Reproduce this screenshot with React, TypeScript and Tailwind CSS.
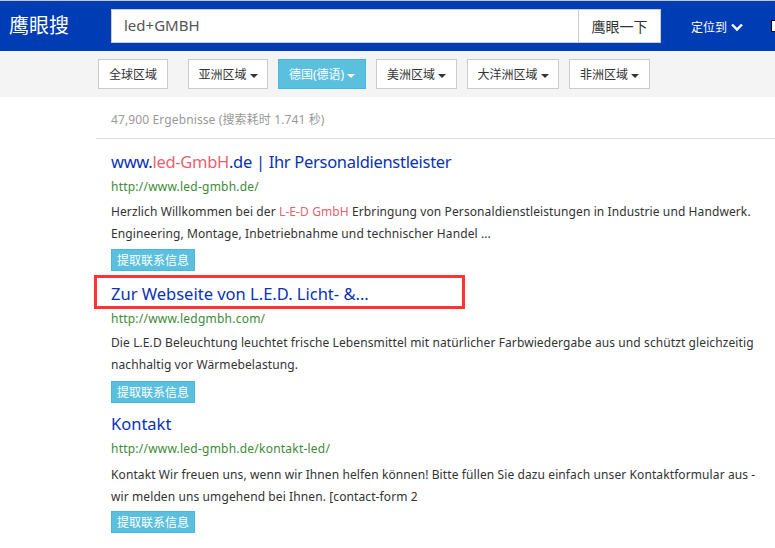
const font = "font-['Noto_Sans','Noto_Sans_CJK_SC',sans-serif]";

const regions = [
  { name: "全球区域", w: "w-[70px] mr-[10px]", caret: false },
  { name: "亚洲区域", w: "w-[80px]", caret: true },
  { name: "德国(德语)", w: "w-[88px]", caret: true, active: true },
  { name: "美洲区域", w: "w-[81px]", caret: true },
  { name: "大洋洲区域", w: "w-[92px]", caret: true },
  { name: "非洲区域", w: "w-[81px]", caret: true },
];

function Extract({ top }: { top: string }) {
  return (
    <div className={`flex h-[22px] w-[84px] items-center justify-center border border-[#46b8da] bg-[#5bc0de] pt-[2px] text-[12px] text-white ${top}`}>
      提取联系信息
    </div>
  );
}

export default function App() {
  return (
    <div className={`relative h-[548px] w-[775px] overflow-hidden bg-white ${font}`}>
      <div className="h-px bg-[#c8c8c8]" />
      {/* header */}
      <div className="flex h-[50px] items-center bg-[#003cb4] pb-px">
        <div className="w-[111px] shrink-0 pl-[9px] text-[20px] leading-none text-white">鹰眼搜</div>
        <div className="flex h-[34px] w-[550px] shrink-0 border border-[#cccccc] bg-white">
          <div className="flex-1 pl-[12px] text-[15px] leading-[31px] text-[#555555]">led+GMBH</div>
          <div className="w-[82px] border-l border-[#cccccc] pt-px text-center text-[14px] leading-[32px] text-[#333333]">鹰眼一下</div>
        </div>
        <div className="ml-[30px] mt-[4px] flex shrink-0 items-center gap-[4px] text-[12px] text-white">
          定位到
          <svg width="12" height="9" viewBox="0 0 12 9" fill="none" stroke="white" strokeWidth="2.4">
            <path d="M1 1.5l5 5 5-5" />
          </svg>
        </div>
        <div className="ml-[28px] h-[12px] w-[12px] shrink-0 border border-black bg-white" />
      </div>
      {/* region filters */}
      <div className="flex h-[46px] items-center gap-[10px] bg-[#f4f4f4] pb-[1px] pl-[98px]">
        {regions.map((r) => (
          <div
            key={r.name}
            className={`flex h-[30px] items-center justify-center gap-[3px] border pt-[3px] text-[12px] ${r.w} ${
              r.active ? "border-[#46b8da] bg-[#5bc0de] text-white" : "border-[#cccccc] bg-white text-[#333333]"
            }`}
          >
            {r.name}
            {r.caret && (
              <span className={`mt-[2px] h-0 w-0 border-x-[4px] border-t-[4px] border-x-transparent ${r.active ? "border-t-white" : "border-t-[#333333]"}`} />
            )}
          </div>
        ))}
      </div>
      {/* results */}
      <div className="ml-[96px] h-[42px] border-b border-[#dddddd] pl-[15px] pt-[14px] text-[12px] leading-[17px] tracking-[0.12px] text-[#999999]">
        47,900 Ergebnisse (搜索耗时 1.741 秒)
      </div>
      <div className="pl-[111px] pr-[15px] pt-[11px]">
        <div className="text-[16.5px] leading-[24px] tracking-[-0.3px] text-[#0a32b4]">
          www.<span className="text-[#e5636f]">led-GmbH</span>.de | Ihr Personaldienstleister
        </div>
        <div className="mt-[4px] text-[12px] leading-[18px] tracking-[0.22px] text-[#3d8b37]">http://www.led-gmbh.de/</div>
        <div className="mt-[5px] text-[12px] leading-[22px] tracking-[0.1px] text-[#333333]">
          Herzlich Willkommen bei der <span className="text-[#e5636f]">L-E-D GmbH</span> Erbringung von Personaldienstleistungen in Industrie und Handwerk. Engineering, Montage, Inbetriebnahme und technischer Handel ...
        </div>
        <Extract top="mt-[4px]" />

        <div className="mt-[11px] text-[16.5px] leading-[24px] text-[#0a32b4]">Zur Webseite von L.E.D. Licht- &amp;...</div>
        <div className="mt-[4px] text-[12px] leading-[18px] tracking-[0.22px] text-[#3d8b37]">http://www.ledgmbh.com/</div>
        <div className="mt-[4px] text-[12px] leading-[22px] tracking-[0.1px] text-[#333333]">
          Die L.E.D Beleuchtung leuchtet frische Lebensmittel mit natürlicher Farbwiedergabe aus und schützt gleichzeitig nachhaltig vor Wärmebelastung.
        </div>
        <Extract top="mt-[5px]" />

        <div className="mt-[9px] text-[16.5px] leading-[24px] text-[#0a32b4]">Kontakt</div>
        <div className="mt-[4px] text-[12px] leading-[18px] tracking-[0.22px] text-[#3d8b37]">http://www.led-gmbh.de/kontakt-led/</div>
        <div className="mt-[6px] text-[12px] leading-[22px] tracking-[0.1px] text-[#333333]">
          Kontakt Wir freuen uns, wenn wir Ihnen helfen können! Bitte füllen Sie dazu einfach unser Kontaktformular aus - wir melden uns umgehend bei Ihnen. [contact-form 2
        </div>
        <Extract top="mt-[3px]" />
      </div>
      {/* annotation box drawn over the screenshot */}
      <div className="absolute left-[94px] top-[275px] h-[34px] w-[371px] border-[3px] border-[#ff3333]" />
    </div>
  );
}
